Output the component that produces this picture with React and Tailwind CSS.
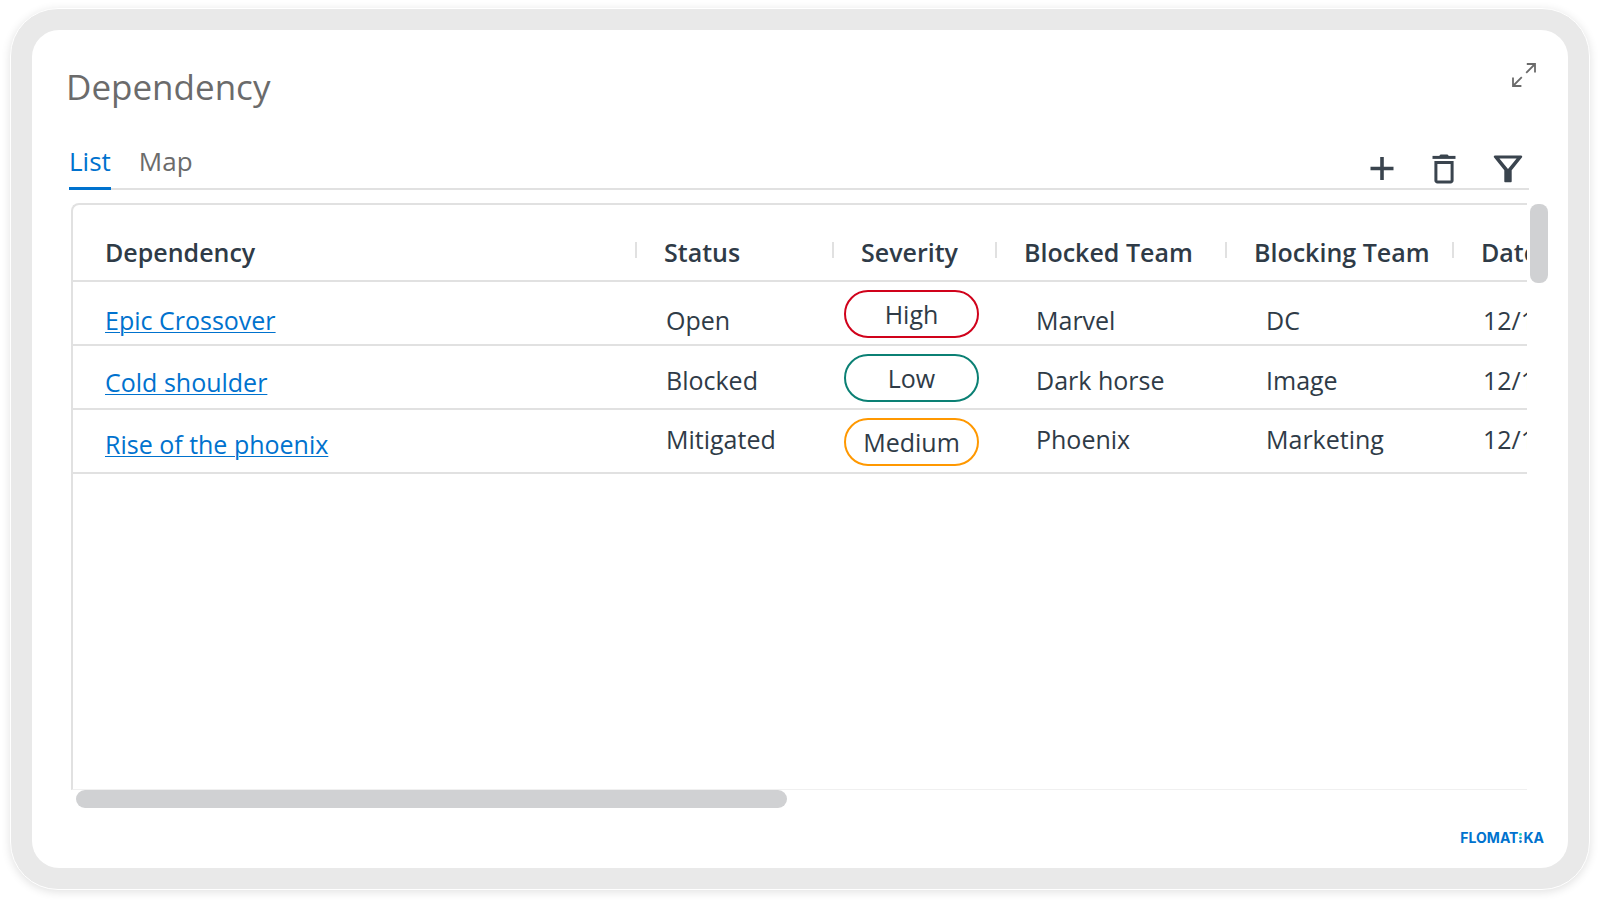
import { useState } from 'react'
import clsx from 'clsx'

const tabs = ['List', 'Map']

const columns = [
  { label: 'Dependency', width: '' },
  { label: 'Status', width: 'w-[197px]' },
  { label: 'Severity', width: 'w-[163px]' },
  { label: 'Blocked Team', width: 'w-[230px]' },
  { label: 'Blocking Team', width: 'w-[227px]' },
  { label: 'Date', width: 'w-[180px]' },
]

const severityStyles = {
  High: 'border-[#d0021b]',
  Low: 'border-[#0b8074]',
  Medium: 'border-[#ff9800]',
}

const rows = [
  {
    name: 'Epic Crossover',
    status: 'Open',
    severity: 'High',
    blocked: 'Marvel',
    blocking: 'DC',
    date: '12/1',
    link: 'pt-3.5',
    cell: 'pt-3.5',
  },
  {
    name: 'Cold shoulder',
    status: 'Blocked',
    severity: 'Low',
    blocked: 'Dark horse',
    blocking: 'Image',
    date: '12/1',
    link: 'pt-2.5',
    cell: 'pt-1.5',
  },
  {
    name: 'Rise of the phoenix',
    status: 'Mitigated',
    severity: 'Medium',
    blocked: 'Phoenix',
    blocking: 'Marketing',
    date: '12/1',
    link: 'pt-1.5',
    cell: 'pb-1',
  },
]

function ExpandIcon() {
  return (
    <svg width="24" height="24" viewBox="0 0 24 24" fill="none" stroke="currentColor" strokeWidth="1.8">
      <path d="M14.2 9.8 23 1M14.8 1H23v8.4M9.8 14.2 1 23M1 14.6V23h8.4" />
    </svg>
  )
}

function PlusIcon() {
  return (
    <svg width="24" height="30" viewBox="0 0 24 30" fill="none" stroke="currentColor" strokeWidth="3.6">
      <path d="M12 3v23M.5 14.5h23" />
    </svg>
  )
}

function TrashIcon() {
  return (
    <svg width="24" height="30" viewBox="0 0 24 30" fill="none" stroke="currentColor" strokeWidth="3">
      <path d="M.5 3.4h23" />
      <path d="M7 2.2 8.5.4h7L17 2.200z" fill="currentColor" stroke="none" />
      <path d="M3.9 8.500h16.200v18a1.500 1.500 0 0 1-1.500 1.500H5.400a1.500 1.500 0 0 1-1.500-1.500z" />
    </svg>
  )
}

function FilterIcon() {
  return (
    <svg width="30" height="30" viewBox="0 0 30 30" fill="currentColor">
      <path
        fillRule="evenodd"
        d="M2 1.500h26c1.200 0 1.600 1.200.9 2.100L18.700 16.200v11c0 .7-.4 1.100-1.100 1.100h-5.200c-.7 0-1.100-.4-1.100-1.100v-11L1.100 3.600C.4 2.700.8 1.500 2 1.500zM6.400 4.500l8.600 10.600L23.600 4.500z"
      />
    </svg>
  )
}

function Logo() {
  return (
    <a href="#" aria-label="Flomatika" className="flex items-center font-['Inter',sans-serif] text-[14px] leading-4 font-bold text-[#0072ce]">
      FLOMAT
      <svg width="5" height="10" viewBox="0 0 5 10">
        <circle cx="2.500" cy="1.400" r="1.400" fill="#1fd3c0" />
        <circle cx="2.500" cy="5" r="1.300" fill="#12a5d0" />
        <circle cx="2.500" cy="8.600" r="1.300" fill="#0072ce" />
      </svg>
      KA
    </a>
  )
}

export default function App() {
  const [activeTab, setActiveTab] = useState('List')

  return (
    <div className="flex min-h-screen flex-col bg-white px-2.5 pt-2 pb-3 font-['Open_Sans',sans-serif] text-[#2f3b47]">
      <div className="flex flex-1 flex-col rounded-[48px] border border-white bg-[#e9e9e9] p-[21px] shadow-[0_2px_10px_rgba(0,0,0,0.12)]">
        <main className="flex flex-1 flex-col rounded-[27px] bg-white pt-[37px] pr-5 pb-[22px] pl-[37px]">
          {/* Title */}
          <header className="-ml-1 flex items-start justify-between pr-3">
            <h1 className="pl-px text-[35px] leading-10 text-[#6b6b6b]">Dependency</h1>
            <button aria-label="Expand" className="-mt-1 text-[#6b6b6b]">
              <ExpandIcon />
            </button>
          </header>

          {/* Tabs and actions */}
          <div className="mt-[38px] mr-[19px] flex items-end justify-between border-b-2 border-[#e1e1e1]">
            <div role="tablist" className="-mb-0.5 flex gap-7">
              {tabs.map((tab) => (
                <button
                  key={tab}
                  role="tab"
                  aria-selected={activeTab === tab}
                  onClick={() => setActiveTab(tab)}
                  className={clsx(
                    'border-b-3 pb-2.5 text-[26px] leading-8',
                    activeTab === tab ? 'border-[#0072ce] text-[#0072ce]' : 'border-transparent text-[#6b6b6b]'
                  )}
                >
                  {tab}
                </button>
              ))}
            </div>
            <div className="flex items-center pr-1.5 pb-1 text-[#3a444e]">
              <button aria-label="Add" className="pr-[38px]">
                <PlusIcon />
              </button>
              <button aria-label="Delete" className="pr-[37px]">
                <TrashIcon />
              </button>
              <button aria-label="Filter">
                <FilterIcon />
              </button>
            </div>
          </div>

          {/* Table */}
          <div className="mt-[13px] ml-0.5 flex flex-1 gap-[3px]">
            <div className="min-w-0 flex-1 overflow-hidden rounded-tl-lg border-t-2 border-b border-l-2 border-[#e1e1e1] border-b-[#f0f0f0]">
              <table className="w-[calc(100%+105px)] table-fixed border-separate border-spacing-0 text-left text-[25px] leading-8">
                <thead>
                  <tr>
                    {columns.map((col, i) => (
                      <th
                        key={col.label}
                        className={clsx('h-[77px] border-b-2 border-[#e1e1e1] p-0 pt-[18px] font-semibold whitespace-nowrap', col.width)}
                      >
                        <div className="flex items-start">
                          {i > 0 && <span className="mt-1.5 h-4 w-0.5 shrink-0 bg-[#e1e1e1]" />}
                          <span className={i > 0 ? 'pl-[27px]' : 'pl-8'}>{col.label}</span>
                        </div>
                      </th>
                    ))}
                  </tr>
                </thead>
                <tbody className="[&_td]:h-16 [&_td]:border-b-2 [&_td]:border-[#e1e1e1] [&_td]:whitespace-nowrap">
                  {rows.map((row) => (
                    <tr key={row.name}>
                      <td className={clsx('pl-8', row.link)}>
                        <a href="#" className="text-[#0072ce] underline decoration-1 underline-offset-2">
                          {row.name}
                        </a>
                      </td>
                      <td className={clsx('pl-[31px]', row.cell)}>{row.status}</td>
                      <td className="pt-0.5 pl-3">
                        <span
                          className={clsx(
                            'flex h-12 w-[135px] items-center justify-center rounded-full border-2',
                            severityStyles[row.severity]
                          )}
                        >
                          {row.severity}
                        </span>
                      </td>
                      <td className={clsx('pl-[41px]', row.cell)}>{row.blocked}</td>
                      <td className={clsx('pl-[41px]', row.cell)}>{row.blocking}</td>
                      <td className={clsx('pl-[31px]', row.cell)}>{row.date}</td>
                    </tr>
                  ))}
                </tbody>
              </table>
            </div>
            <div className="w-[18px] pt-px">
              <div className="h-[79px] rounded-lg bg-[#d0d1d3]" />
            </div>
          </div>
          <div className="mr-5 ml-[7px]">
            <div className="h-[18px] w-[49%] rounded-full bg-[#d0d1d3]" />
          </div>

          <footer className="mt-[22px] flex justify-end pr-1">
            <Logo />
          </footer>
        </main>
      </div>
    </div>
  )
}
